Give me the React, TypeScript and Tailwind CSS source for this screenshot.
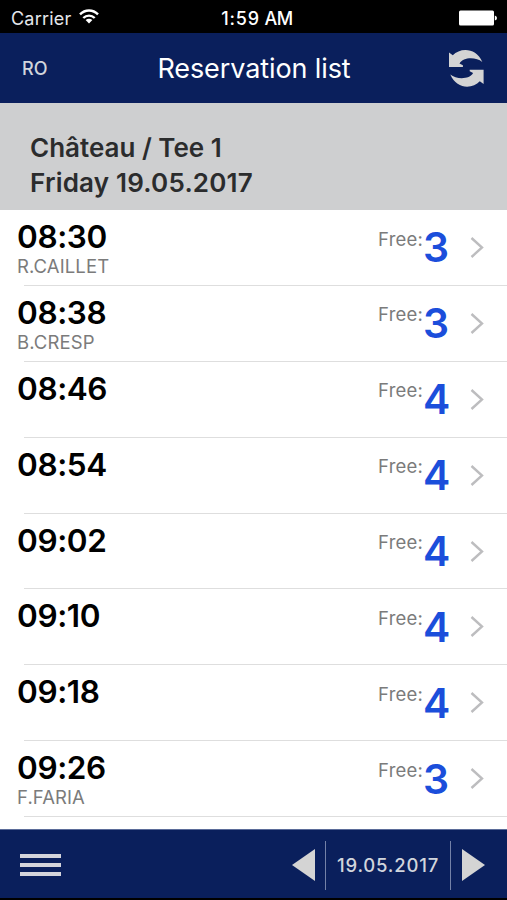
type Reservation = {
  time: string;
  player?: string;
  free: number;
};

const reservations: Reservation[] = [
  { time: "08:30", player: "R.CAILLET", free: 3 },
  { time: "08:38", player: "B.CRESP", free: 3 },
  { time: "08:46", free: 4 },
  { time: "08:54", free: 4 },
  { time: "09:02", free: 4 },
  { time: "09:10", free: 4 },
  { time: "09:18", free: 4 },
  { time: "09:26", player: "F.FARIA", free: 3 },
];

const refreshArrow = "M0 3.5L3.8 6.3C11 -1.5 27 -2 33.3 13C27 7.8 14 8 10.5 14.5L13.9 16.3V17.9H0Z";

function StatusBar() {
  return (
    <div className="grid h-[33px] grid-cols-3 items-center bg-black pt-1 pr-2.5 pl-[11px] text-white">
      <div className="flex items-center gap-2">
        <span className="text-[18px] leading-[22px] tracking-[0.2px] text-gray-200">Carrier</span>
        <svg width="20" height="15" viewBox="0 0 20 15" className="mb-1" fill="none" stroke="currentColor" strokeWidth="2.4">
          <path d="M1 5.4C6 0.2 14 0.2 19 5.4" />
          <path d="M4.3 9C7.5 5.8 12.5 5.8 15.7 9" />
          <path d="M10 14.6L6.6 11.1Q10 8.3 13.4 11.1Z" fill="currentColor" stroke="none" />
        </svg>
      </div>
      <span className="pl-1.5 text-center text-[18px] leading-[22px] font-medium tracking-[0.8px] whitespace-nowrap [word-spacing:-1px]">
        1:59 <span className="tracking-[-0.4px]">AM</span>
      </span>
      <svg width="39" height="16" viewBox="0 0 39 16" className="mb-px ml-px justify-self-end" fill="currentColor">
        <rect x="1" y="0.5" width="35" height="15" rx="1.5" />
        <path d="M36.8 5.5Q39 6 39 8Q39 10 36.8 10.5Z" />
      </svg>
    </div>
  );
}

function Header() {
  return (
    <header className="grid h-[70px] grid-cols-[100px_1fr_100px] items-center bg-[#0a1f5c] px-[22px]">
      <span className="pt-0.5 text-[18px] leading-[22px] font-medium text-gray-300">RO</span>
      <h1 className="pt-0.5 pl-px text-center text-[27px] leading-[34px] tracking-[-0.1px] whitespace-nowrap text-white">
        Reservation list
      </h1>
      <svg width="36" height="38" viewBox="0 0 36 38" className="justify-self-end" fill="#d4d4d4">
        <path d={refreshArrow} />
        <path d={refreshArrow} transform="rotate(180 17.3 19.3)" />
      </svg>
    </header>
  );
}

function ReservationRow({ time, player, free }: Reservation) {
  return (
    <li className="relative flex h-[75.9px] shrink-0 justify-between pr-[23px] pl-[17px]">
      <div className="pt-[9px]">
        <div className="text-[31.5px] leading-9 font-semibold tracking-[-0.4px] text-black">{time}</div>
        {player && <div className="text-[18.5px] leading-[22px] tracking-[0.1px] text-[#7b7b7b]">{player}</div>}
      </div>
      <div className="flex items-start">
        <span className="pt-[17.6px] text-[18.5px] leading-[22px] tracking-[0.2px] text-[#7b7b7b]">Free:</span>
        <span className="w-[26px] pt-[12.4px] text-center text-[41px] leading-[50px] font-semibold text-[#1b4edb]">
          {free}
        </span>
        <svg width="14" height="21" viewBox="0 0 14 21" className="mt-[27px] ml-[21px]" fill="none" stroke="#bdbdbf" strokeWidth="2.4">
          <path d="M1.5 1L12 10.5L1.5 20" />
        </svg>
      </div>
      <div className="absolute right-0 bottom-0 left-6 h-px bg-[#dedede]" />
    </li>
  );
}

function BottomBar() {
  return (
    <footer className="flex h-[71px] items-center border-t border-b-2 border-t-[#5b6c99] border-b-black bg-[#0a1f5c] pt-0.5 pr-[22px] pl-5 text-gray-300">
      <div className="flex w-[41px] flex-col gap-[5px]">
        <div className="h-1 bg-[#d4d4dc]" />
        <div className="h-1 bg-[#d4d4dc]" />
        <div className="h-1 bg-[#d4d4dc]" />
      </div>
      <div className="ml-auto flex items-center">
        <svg width="23" height="32" viewBox="0 0 23 32" fill="#d4d4d4">
          <path d="M23 0V32L0 16Z" />
        </svg>
        <div className="mr-[11px] ml-[10px] flex h-[49px] w-[126px] items-center justify-center border-x border-[#7481a7]">
          <span className="text-[18.5px] leading-[22px] font-medium tracking-[0.8px]">19.05.2017</span>
        </div>
        <svg width="23" height="32" viewBox="0 0 23 32" fill="#d4d4d4">
          <path d="M0 0V32L23 16Z" />
        </svg>
      </div>
    </footer>
  );
}

export default function App() {
  return (
    <div className="flex h-[900px] w-[507px] flex-col overflow-hidden bg-white font-['Inter','Liberation_Sans',sans-serif]">
      <StatusBar />
      <Header />
      <section className="h-[107px] bg-[#cecfd0] pt-[27px] pl-[30px] text-[26px] leading-[35px] font-semibold text-[#2b2c2d]">
        <p>Château / Tee 1</p>
        <p className="tracking-[0.2px]">Friday 19.05.2017</p>
      </section>
      <ul className="flex min-h-0 flex-1 flex-col overflow-hidden">
        {reservations.map((reservation) => (
          <ReservationRow key={reservation.time} {...reservation} />
        ))}
      </ul>
      <BottomBar />
    </div>
  );
}
